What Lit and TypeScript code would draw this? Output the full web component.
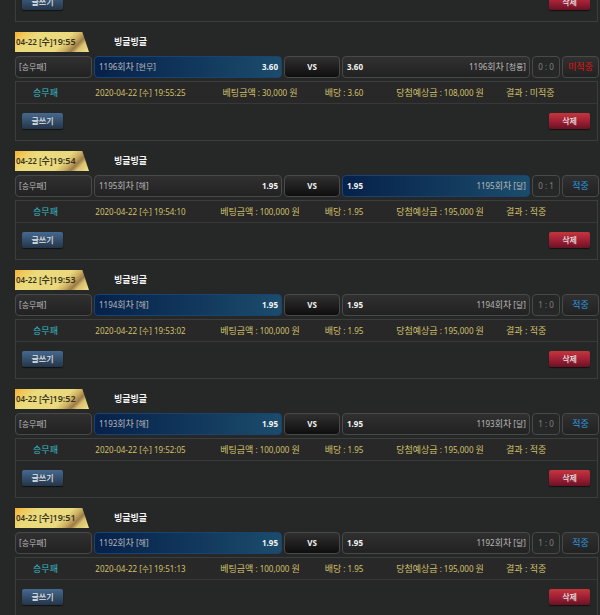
import { LitElement, html, css } from "lit";
import { customElement, property } from "lit/decorators.js";
import { classMap } from "lit/directives/class-map.js";

interface Bet {
  round: number;
  day: string;
  time: string;
  seconds: string;
  home: string;
  away: string;
  odds: string;
  stake: string;
  payout: string;
  score: string;
  pick: "home" | "away";
  won: boolean;
}

const sunMoon = { home: "해", away: "달", odds: "1.95", stake: "100,000", payout: "195,000", won: true, day: "04-22" };

const BETS: Bet[] = [
  { round: 1196, day: "04-22", time: "19:55", seconds: "25", home: "현무", away: "청룡", odds: "3.60", stake: "30,000", payout: "108,000", score: "0 : 0", pick: "home", won: false },
  { ...sunMoon, round: 1195, time: "19:54", seconds: "10", score: "0 : 1", pick: "away" },
  { ...sunMoon, round: 1194, time: "19:53", seconds: "02", score: "1 : 0", pick: "home" },
  { ...sunMoon, round: 1193, time: "19:52", seconds: "05", score: "1 : 0", pick: "home" },
  { ...sunMoon, round: 1192, time: "19:51", seconds: "13", score: "1 : 0", pick: "home" },
];

@customElement("bet-actions")
export class BetActions extends LitElement {
  static styles = css`
    :host {
      display: flex;
      justify-content: space-between;
      padding: 9px 7px 11px 6px;
    }
    button {
      width: 41px;
      height: 16px;
      padding: 0;
      border: 0;
      border-radius: 2px;
      color: #e6e6e6;
      font: 500 8px/16px "Noto Sans", "Noto Sans CJK KR", sans-serif;
      cursor: pointer;
      box-shadow: 0 1px 1px #111;
    }
    .write {
      background: linear-gradient(#46698f, #243549);
    }
    .remove {
      background: linear-gradient(#c4363c, #a02036 50%, #6a1224);
    }
  `;
  render() {
    return html`
      <button class="write" type="button">글쓰기</button>
      <button class="remove" type="button">삭제</button>
    `;
  }
}

@customElement("bet-entry")
export class BetEntry extends LitElement {
  @property({ attribute: false }) bet!: Bet;

  static styles = css`
    :host {
      display: block;
    }
    .head {
      display: flex;
      height: 20px;
      margin-bottom: 4px;
      line-height: 20px;
    }
    .stamp {
      width: 74px;
      box-sizing: border-box;
      padding-left: 1px;
      color: #38331f;
      font-weight: 600;
      white-space: nowrap;
      clip-path: polygon(0 0, 91% 0, 100% 100%, 0 100%);
      background: linear-gradient(
        135deg,
        #f5b02f 0%,
        #f0c95c 12%,
        #eadb7c 26%,
        #ead97d 62%,
        #cdb063 72%,
        #9c7b47 80%,
        #d9c170 86%,
        #f1e48a 100%
      );
    }
    .label {
      font-size: 9px;
    }
    .title {
      margin: 0 0 0 25px;
      font-size: 9px;
      font-weight: 700;
      color: #f4f4f4;
    }
    .match {
      display: grid;
      grid-template-columns: 77px 1fr 56px 1fr 28px 37px;
      gap: 2px;
      height: 22px;
      margin-bottom: 3px;
    }
    .cell {
      display: flex;
      align-items: center;
      justify-content: space-between;
      padding: 0 3px 0 4px;
      border: 1px solid #484949;
      border-radius: 4px;
      background: linear-gradient(#303030, #222222);
      color: #b9b9b9;
      white-space: nowrap;
    }
    .cell.picked {
      border-color: #1a4272;
      background: linear-gradient(90deg, #06214a, #1b4c6c);
    }
    .cell.center {
      justify-content: center;
      padding: 0;
    }
    .cell.type {
      padding: 0 3px;
    }
    .vs {
      background: linear-gradient(#303030, #0e0e0e);
      color: #f0f0f0;
      font-weight: 700;
    }
    .score {
      background: #262727;
      color: #808080;
    }
    .outcome {
      font-size: 9px;
    }
    .win {
      color: #2b9be0;
    }
    .lose {
      color: #e60f0f;
    }
    strong {
      color: #f4f4f4;
      font-weight: 700;
    }
    .detail {
      margin-right: 1px;
      border: 1px solid #3c3d3d;
    }
    .facts {
      display: grid;
      grid-template-columns: 59fr 131fr 108fr 60fr 132fr 91fr;
      height: 21px;
      line-height: 21px;
      border-bottom: 1px solid #373838;
      background: #282828;
      color: #d2c06a;
      text-align: center;
      white-space: nowrap;
    }
    .kind {
      color: #35bcc6;
      font-size: 9px;
    }
    .result {
      font-size: 9px;
      text-align: left;
    }
  `;

  render() {
    const b = this.bet;
    return html`
      <div class="head">
        <div class="stamp">${b.day} [<span class="label">수</span>]<span class="label">${b.time}</span></div>
        <h2 class="title">빙글빙글</h2>
      </div>
      <div class="match">
        <div class="cell type">[승무패]</div>
        <div class=${classMap({ cell: true, picked: b.pick === "home" })}>
          <span>${b.round}<span class="label">회차</span> [${b.home}]</span><strong>${b.odds}</strong>
        </div>
        <div class="cell center vs">VS</div>
        <div class=${classMap({ cell: true, picked: b.pick === "away" })}>
          <strong>${b.odds}</strong><span>${b.round}<span class="label">회차</span> [${b.away}]</span>
        </div>
        <div class="cell center score">${b.score}</div>
        <div class=${classMap({ cell: true, center: true, outcome: true, win: b.won, lose: !b.won })}>
          ${b.won ? "적중" : "미적중"}
        </div>
      </div>
      <div class="detail">
        <div class="facts">
          <span class="kind">승무패</span>
          <span>2020-${b.day} [수] ${b.time}:${b.seconds}</span>
          <span><span class="label">베팅금액</span> : ${b.stake} <span class="label">원</span></span>
          <span><span class="label">배당</span> : ${b.odds}</span>
          <span><span class="label">당첨예상금</span> : ${b.payout} <span class="label">원</span></span>
          <span class="result">결과 : ${b.won ? "적중" : "미적중"}</span>
        </div>
        <bet-actions></bet-actions>
      </div>
    `;
  }
}

@customElement("app-root")
export class AppRoot extends LitElement {
  static styles = css`
    :host {
      display: block;
      height: 100vh;
      overflow: hidden;
      background: #262727;
      font: 8px/12px "Noto Sans", "Noto Sans CJK KR", sans-serif;
    }
    .list {
      display: flex;
      flex-direction: column;
      gap: 10px;
      margin: -15px 1px 0 15px;
    }
    .previous {
      margin-right: 1px;
      border: 1px solid #3c3d3d;
      border-top: 0;
    }
  `;

  render() {
    return html`
      <main class="list">
        <div class="previous"><bet-actions></bet-actions></div>
        ${BETS.map((bet) => html`<bet-entry .bet=${bet}></bet-entry>`)}
      </main>
    `;
  }
}
